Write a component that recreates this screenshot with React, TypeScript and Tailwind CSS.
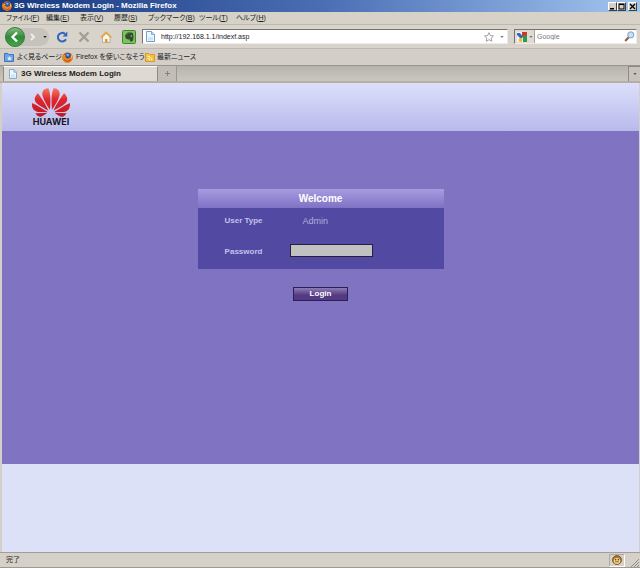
import React, { useState } from 'react';
import { SiHuawei } from 'react-icons/si';

const menus = [
  { label: 'ファイル', hotkey: 'F', width: 'w-[40px]' },
  { label: '編集', hotkey: 'E', width: 'w-[34px]' },
  { label: '表示', hotkey: 'V', width: 'w-[34px]' },
  { label: '履歴', hotkey: 'S', width: 'w-[34px]' },
  { label: 'ブックマーク', hotkey: 'B', width: 'w-[51px]' },
  { label: 'ツール', hotkey: 'T', width: 'w-[37px]' },
  { label: 'ヘルプ', hotkey: 'H', width: 'w-[37px]' },
];

function FirefoxIcon({ className }: { className: string }) {
  return (
    <svg viewBox="0 0 16 16" className={className} aria-hidden="true">
      <circle cx="8" cy="8" r="7.6" fill="#e06a12" />
      <circle cx="8.6" cy="6.4" r="5" fill="#2c56a8" />
      <path d="M6 3.5c2-1 4-.6 5 .6-1 .2-1.500.900-1 2-1.500-.2-2.500-.2-4-2.600z" fill="#7fb4e8" />
      <path d="M.8 3.500c.8.2 1.400.500 2 1.200C4 4.200 5 4.800 6 5.600c-.8.600-1.200 1-1 2 1.500 2.200 4.600 2.400 7 .4 1-1 1.200-3 .800-5 2.400 2 3.200 5 2 8-1.200 2.800-4 4.600-7 4.400C3.500 15 .6 12 .4 8.500.300 6.500.5 5 .8 3.500z" fill="#ee8a1c" />
      <path d="M2 8c.8 3 3.500 5 6.500 4.600 2.500-.3 4-1.800 4.700-3.600.2 3-2.200 5-5 5C4.800 14 2.300 11.500 2 8z" fill="#c43c0c" />
      <path d="M13 4c1.500 1.500 2 4 1.200 6-.2-1.500-.5-2-1-2.600z" fill="#ffd84a" />
    </svg>
  );
}

function PageIcon({ className }: { className: string }) {
  return (
    <svg viewBox="0 0 9 11" className={className} aria-hidden="true">
      <path d="M.5.5h5l3 3v7h-8z" fill="#eef6fe" stroke="#6f9fd0" />
      <path d="M5.500.5v3h3" fill="#bcd8f4" stroke="#6f9fd0" strokeWidth=".8" />
      <path d="M2 6h5v3.500H2z" fill="#cfe4f8" />
    </svg>
  );
}

function Caret({ className }: { className: string }) {
  return (
    <svg viewBox="0 0 5 3" className={className} aria-hidden="true">
      <path d="M0 0h5L2.500 3z" fill="currentColor" />
    </svg>
  );
}

function TitleBar() {
  const box = 'h-[9px] w-[9px] bg-[#d4d0c8] border border-t-white border-l-white border-r-[#404040] border-b-[#404040]';
  return (
    <div className="flex h-3 items-center bg-linear-to-r from-[#17397f] via-[#4a6db4] to-[#a3c6ee] pl-[2px] pr-[3px]">
      <FirefoxIcon className="mr-[2px] h-[10px] w-[10px]" />
      <h1 className="flex-1 whitespace-nowrap text-[8px] leading-3 font-bold text-white">3G Wireless Modem Login - Mozilla Firefox</h1>
      <button type="button" aria-label="最小化" className={box}>
        <svg viewBox="0 0 7 7" className="h-[7px] w-[7px]"><path d="M1 5h4v1.500H1z" /></svg>
      </button>
      <button type="button" aria-label="最大化" className={box}>
        <svg viewBox="0 0 7 7" className="h-[7px] w-[7px]"><path d="M.5.5h6v6h-6zM1.500 2v3.500h4V2z" fillRule="evenodd" /></svg>
      </button>
      <button type="button" aria-label="閉じる" className={`ml-[2px] ${box}`}>
        <svg viewBox="0 0 7 7" className="h-[7px] w-[7px]"><path d="M1 1l5 5M6 1L1 6" stroke="#000" strokeWidth="1.300" /></svg>
      </button>
    </div>
  );
}

function MenuBar() {
  return (
    <nav className="flex h-[13px] items-center border-b border-[#bdb9b0] bg-[#d6d2c8] pl-[6px]">
      {menus.map(m => (
        <button key={m.hotkey} type="button" className={`${m.width} shrink-0 whitespace-nowrap text-left text-[7px] leading-3`}>
          {m.label}(<u>{m.hotkey}</u>)
        </button>
      ))}
    </nav>
  );
}

function NavBar() {
  const [url, setUrl] = useState('http://192.168.1.1/indexf.asp');
  const [query, setQuery] = useState('');

  return (
    <div className="flex h-6 items-center border-b border-[#bdb9b0] bg-[#d8d4cc] pl-[5px] pr-[3px]">
      {/* 戻る / 進む */}
      <div className="flex h-[18px] w-[44px] shrink-0 items-center rounded-full bg-[#c6c3bc]">
        <button type="button" aria-label="戻る">
          <svg viewBox="0 0 20 20" className="h-5 w-5">
            <defs>
              <linearGradient id="back" x1="0" y1="0" x2="0" y2="1">
                <stop offset="0" stopColor="#86bd82" />
                <stop offset=".5" stopColor="#2f8a3a" />
                <stop offset="1" stopColor="#3fae42" />
              </linearGradient>
            </defs>
            <circle cx="10" cy="10" r="9.500" fill="url(#back)" stroke="#3c7540" />
            <path d="M12 5.500L7.500 10l4.500 4.500" fill="none" stroke="#fff" strokeWidth="2.400" />
          </svg>
        </button>
        <button type="button" aria-label="進む" className="ml-[4px]">
          <svg viewBox="0 0 8 8" className="h-2 w-2"><path d="M2 1l3 3-3 3" fill="none" stroke="#f0eeea" strokeWidth="1.800" /></svg>
        </button>
        <button type="button" aria-label="履歴" className="ml-[6px]"><Caret className="h-[2px] w-1" /></button>
      </div>
      <div className="ml-[7px] flex shrink-0 items-center gap-[10px]">
        <button type="button" aria-label="更新">
          <svg viewBox="0 0 12 12" className="h-3 w-3">
            <path d="M10 8.200A4.300 4.300 0 1 1 9 2.900" fill="none" stroke="#2d66bd" strokeWidth="2" />
            <path d="M11.300.6v4.900H6.500z" fill="#2d66bd" />
          </svg>
        </button>
        <button type="button" aria-label="中止">
          <svg viewBox="0 0 12 12" className="h-3 w-3"><path d="M1.500 1.500l9 9M10.500 1.500l-9 9" stroke="#a19e98" strokeWidth="2.400" /></svg>
        </button>
        <button type="button" aria-label="ホーム">
          <svg viewBox="0 0 12 12" className="h-3 w-3">
            <path d="M2.500 6v5.500h7.500V6L6.200 2.500z" fill="#f7f4ea" stroke="#a99878" strokeWidth=".7" />
            <path d="M.8 6.500L6.200 1.200l5.300 5.300" fill="none" stroke="#e5a53b" strokeWidth="1.500" />
            <path d="M5 8h2.500v3.500H5z" fill="#d99a35" />
          </svg>
        </button>
        <button type="button" aria-label="Evernote">
          <svg viewBox="0 0 14 14" className="h-[14px] w-[14px]">
            <rect x=".5" y=".5" width="13" height="13" rx="1" fill="#7cc45a" stroke="#428436" />
            <path d="M3.200 5.200L6 2.400h3.200c1.800.2 2.300 1.400 2.300 4.200 0 3-.4 5-2 5-1.600 0-2-.8-1.800-2.200C5.400 9.600 3.600 9 3.200 7z" fill="#334d31" />
            <path d="M3.200 4.700h2.500V2.200z" fill="#4a6a44" />
            <circle cx="9.300" cy="6" r=".7" fill="#a3d388" />
          </svg>
        </button>
      </div>
      {/* アドレスバー */}
      <div className="ml-[6px] flex h-[15px] min-w-0 flex-1 items-center border border-t-[#77746e] border-l-[#77746e] border-r-[#eeece8] border-b-[#eeece8] bg-white px-[3px]">
        <PageIcon className="mr-[6px] h-[11px] w-[9px] shrink-0" />
        <input
          type="text"
          aria-label="アドレス"
          value={url}
          onChange={e => setUrl(e.target.value)}
          className="h-3 min-w-0 flex-1 text-[7px] leading-3 outline-none"
        />
        <button type="button" aria-label="ブックマークに追加">
          <svg viewBox="0 0 12 12" className="h-[10px] w-[10px]">
            <path d="M6 .8l1.600 3.500 3.800.4-2.800 2.600.8 3.800L6 9.200l-3.400 1.900.8-3.800L.6 4.700l3.800-.4z" fill="#fff" stroke="#8f8f8f" />
          </svg>
        </button>
        <button type="button" aria-label="候補" className="ml-[6px]"><Caret className="h-[2px] w-1 text-[#777]" /></button>
      </div>
      {/* 検索バー */}
      <form onSubmit={e => e.preventDefault()} className="ml-[6px] flex h-[15px] w-[123px] shrink-0 items-center border border-t-[#77746e] border-l-[#77746e] border-r-[#eeece8] border-b-[#eeece8] bg-white">
        <button type="button" aria-label="検索エンジン" className="mr-[2px] flex h-[13px] items-center border-r border-[#a5a29b] bg-[#dedbd4] pl-[2px] pr-px">
          <svg viewBox="0 0 10 10" className="h-[10px] w-[10px]">
            <rect width="10" height="10" fill="#f4f6fb" />
            <path d="M5 0h5v4L5 5z" fill="#d33427" />
            <path d="M6 4l4-1v7H6z" fill="#2d9a4a" />
            <path d="M0 1h3l3 4-2 2-4-4z" fill="#3465c3" />
            <circle cx="3.500" cy="8" r="2" fill="#edba3c" />
          </svg>
          <Caret className="ml-[2px] h-[2px] w-1 text-[#777]" />
        </button>
        <input
          type="text"
          aria-label="検索"
          placeholder="Google"
          value={query}
          onChange={e => setQuery(e.target.value)}
          className="h-3 min-w-0 flex-1 text-[7px] leading-3 outline-none placeholder:text-[#777]"
        />
        <button type="submit" aria-label="検索を実行" className="mr-px">
          <svg viewBox="0 0 11 11" className="h-[11px] w-[11px]">
            <path d="M5 6L1.200 10" stroke="#8a5b48" strokeWidth="2" />
            <circle cx="6.800" cy="3.900" r="3.100" fill="#c4e0f7" stroke="#7d9fc0" />
          </svg>
        </button>
      </form>
    </div>
  );
}

function BookmarksBar() {
  return (
    <div className="flex h-[17px] items-center border-b border-[#98958f] bg-[#d3cfc8] pl-1 text-[7px] leading-3 whitespace-nowrap">
      <a href="#" className="flex w-[58px] shrink-0 items-center gap-[3px]">
        <svg viewBox="0 0 10 10" className="h-[10px] w-[10px] shrink-0">
          <path d="M.5 1.500h3.500l1 1h4.500v7H.5z" fill="#6fa3e4" stroke="#3d74bd" />
          <path d="M5.500 4l.8 1.500 1.700.2-1.200 1.100.3 1.700-1.600-.8L4 8.500l.2-1.700L3 5.700l1.700-.2z" fill="#e1efff" />
        </svg>
        よく見るページ
      </a>
      <a href="#" className="flex w-[83px] shrink-0 items-center gap-[3px]">
        <FirefoxIcon className="h-[11px] w-[11px] shrink-0" />
        Firefox を使いこなそう
      </a>
      <a href="#" className="flex items-center gap-[2px]">
        <svg viewBox="0 0 10 10" className="h-[10px] w-[10px] shrink-0">
          <path d="M.5 1.500h3.500l1 1h4.500v7H.5z" fill="#f6c13e" stroke="#d79b2a" />
          <path d="M2.500 4.200a4.200 4.200 0 0 1 4.300 4.300M2.500 6.200a2.200 2.200 0 0 1 2.300 2.300" fill="none" stroke="#fff6d8" />
        </svg>
        最新ニュース
      </a>
    </div>
  );
}

function TabBar() {
  return (
    <div className="flex h-[17px] border-b-2 border-[#b3afa7] bg-linear-to-b from-[#b7b3ad] to-[#cbc7c0] pl-[3px]">
      <button type="button" className="flex w-[155px] shrink-0 items-center border-x border-t border-[#8d8a84] border-t-white bg-[#dedad3] pl-[5px] text-[8px] leading-3 font-bold whitespace-nowrap">
        <PageIcon className="mr-[4px] h-[10px] w-2 shrink-0" />
        3G Wireless Modem Login
      </button>
      <button type="button" aria-label="新しいタブ" className="flex w-[19px] items-center justify-center border-r border-[#9b9892] bg-[#c2beb7]">
        <svg viewBox="0 0 7 7" className="h-[7px] w-[7px]"><path d="M3.500 1v5M1 3.500h5" stroke="#85827d" /></svg>
      </button>
      <button type="button" aria-label="タブの一覧" className="ml-auto flex w-3 items-center justify-center border-l border-t border-[#8d8a84] bg-[#c8c4bd]">
        <Caret className="h-[2px] w-1 text-[#555]" />
      </button>
    </div>
  );
}

function LoginPage() {
  const [password, setPassword] = useState('');

  return (
    <main className="flex flex-1 flex-col border-l-2 border-r border-l-[#d4d0c8] border-r-[#d4d0c8] bg-[#dde1f8]">
      <header className="h-12 bg-linear-to-b from-[#dcdffb] to-[#b9baec] pl-[29px] pt-[5px]">
        <div className="flex w-10 flex-col items-center">
          <svg className="absolute h-0 w-0" aria-hidden="true">
            <defs>
              <linearGradient id="petal" x1="0" y1="0" x2="0" y2="1">
                <stop offset="0" stopColor="#f47a62" />
                <stop offset=".4" stopColor="#e0262c" />
                <stop offset="1" stopColor="#bc1822" />
              </linearGradient>
            </defs>
          </svg>
          <SiHuawei viewBox="0 3 24 18" fill="url(#petal)" className="h-[29px] w-[38px]" />
          <span className="font-[Inter,sans-serif] text-[9px] leading-[10px] font-bold text-[#181420]">HUAWEI</span>
        </div>
      </header>
      <form onSubmit={e => e.preventDefault()} className="flex flex-col items-center bg-[#7f73c2] pt-[58px] pb-[163px] font-['Liberation_Sans',Arial,sans-serif]">
        <section className="w-[246px] bg-[#5149a2]">
          <h2 className="h-[19px] bg-linear-to-b from-[#a79ce0] to-[#7f72c5] text-center text-[10px] leading-5 font-bold text-white">Welcome</h2>
          <div className="grid h-[61px] grid-cols-[92px_1fr] grid-rows-2 items-center text-[8px]">
            <span className="pb-1 text-center font-bold text-[#c5c1e8]">User Type</span>
            <span className="pb-1 pl-[13px] text-[9px] text-[#b3aedd]">Admin</span>
            <label htmlFor="password" className="pb-1 text-center font-bold text-[#c5c1e8]">Password</label>
            <div className="flex pb-[6px]">
              <input
                id="password"
                type="password"
                value={password}
                onChange={e => setPassword(e.target.value)}
                className="h-[13px] w-[83px] border border-[#25203f] bg-[#c1c1c1] px-1 outline-none"
              />
            </div>
          </div>
        </section>
        <button type="submit" className="mt-[18px] h-[14px] w-[55px] border border-[#2b2055] bg-linear-to-b from-[#8d7db4] to-[#533a83] to-60% text-[8px] leading-3 font-bold text-white">
          Login
        </button>
      </form>
    </main>
  );
}

function StatusBar() {
  return (
    <footer className="flex h-4 items-center border-t border-b border-t-[#a19e97] border-b-[#9c9992] bg-[#d5d1c8] pl-[6px] pr-px text-[7px] leading-3">
      <span className="flex-1">完了</span>
      <span className="flex h-[13px] w-4 items-center justify-center border border-[#b0ada5] border-r-white border-b-white">
        <svg viewBox="0 0 10 10" className="h-[10px] w-[10px]" role="img" aria-label="Greasemonkey">
          <circle cx="5" cy="5" r="4.500" fill="#a87435" stroke="#674017" strokeWidth=".7" />
          <ellipse cx="5" cy="6" rx="3.300" ry="2.900" fill="#f3d68f" />
          <circle cx="3.700" cy="4.800" r=".7" fill="#432609" />
          <circle cx="6.300" cy="4.800" r=".7" fill="#432609" />
          <path d="M3.200 6.800h3.600" stroke="#6d441a" strokeWidth=".8" />
        </svg>
      </span>
      <svg viewBox="0 0 10 10" className="ml-[4px] h-[10px] w-[10px] self-end" aria-hidden="true">
        <path d="M2 10l8-8M5 10l5-5M8 10l2-2" stroke="#8f8c85" />
      </svg>
    </footer>
  );
}

export default function App() {
  return (
    <div lang="ja" className="flex min-h-screen flex-col bg-[#d4d0c8] font-['Liberation_Sans','Noto_Sans_CJK_JP',sans-serif] text-[#1c1c1c] [font-feature-settings:'palt']">
      <TitleBar />
      <MenuBar />
      <NavBar />
      <BookmarksBar />
      <TabBar />
      <LoginPage />
      <StatusBar />
    </div>
  );
}
